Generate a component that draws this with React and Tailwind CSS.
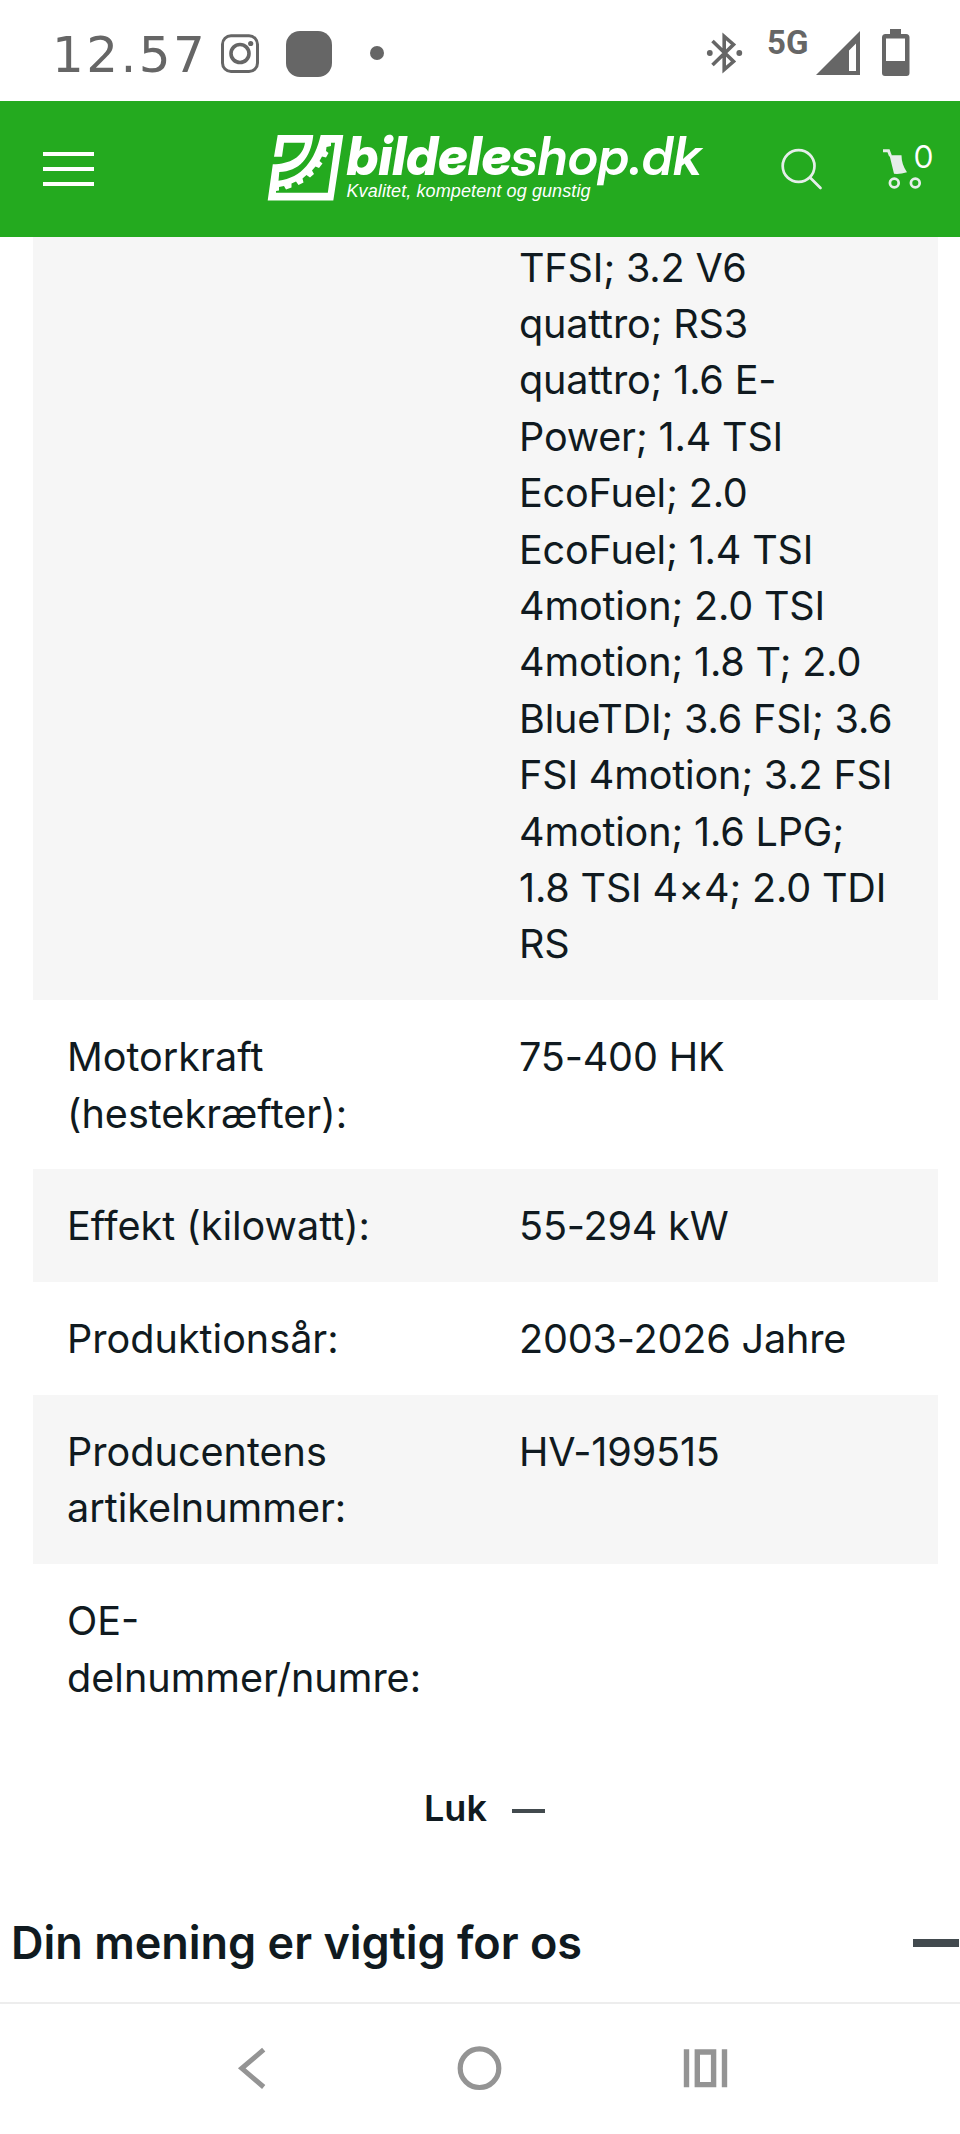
const rows = [
  { label: '', value: 'TFSI; 3.2 V6\nquattro; RS3\nquattro; 1.6 E-\nPower; 1.4 TSI\nEcoFuel; 2.0\nEcoFuel; 1.4 TSI\n4motion; 2.0 TSI\n4motion; 1.8 T; 2.0\nBlueTDI; 3.6 FSI; 3.6\nFSI 4motion; 3.2 FSI\n4motion; 1.6 LPG;\n1.8 TSI 4×4; 2.0 TDI\nRS', first: true },
  { label: 'Motorkraft\n(hestekræfter):', value: '75-400 HK' },
  { label: 'Effekt (kilowatt):', value: '55-294 kW' },
  { label: 'Produktionsår:', value: '2003-2026 Jahre' },
  { label: 'Producentens\nartikelnummer:', value: 'HV-199515' },
  { label: 'OE-\ndelnummer/numre:', value: '' },
];

function StatusBar() {
  return (
    <div className="flex h-[101px] shrink-0 items-start text-[#666666]">
      <div className="ml-[52px] mt-[25px] h-[60px] w-[168px] font-['DejaVu_Sans'] text-[50px] leading-[60px] tracking-[2.4px]">12.57</div>
      <svg className="mt-[34px] h-[39px] w-[39px]" viewBox="0 0 39 39" fill="none" stroke="currentColor" strokeWidth="3">
        <rect x="2.5" y="1.8" width="35" height="35.7" rx="8.5" />
        <circle cx="20" cy="19.5" r="9" strokeWidth="3.6" />
        <circle cx="30.7" cy="9.5" r="2.6" fill="currentColor" stroke="none" />
      </svg>
      <div className="ml-[27px] mt-[31px] h-[46px] w-[46px] rounded-[14px] bg-[#666666]" />
      <div className="ml-[38px] mt-[46px] h-[14px] w-[14px] rounded-full bg-[#666666]" />
      <svg className="ml-[321px] mt-[32px] h-[42px] w-[40px]" viewBox="0 0 40 42" fill="none" stroke="currentColor" strokeWidth="3.6">
        <path d="M7.500 9 L28.500 29.500 L19.200 37.5 V4.500 L28.500 12.500 L7.500 33" />
        <circle cx="4.800" cy="21" r="2.9" fill="currentColor" stroke="none" />
        <circle cx="34.300" cy="21" r="2.9" fill="currentColor" stroke="none" />
      </svg>
      <div className="ml-[22px] mt-[24px] w-[47px] font-[Roboto] text-[33px] font-bold leading-[38px]">5G</div>
      <svg className="ml-[2px] mt-[31px] h-[45px] w-[45px]" viewBox="0 0 45 45">
        <path fillRule="evenodd" fill="currentColor" d="M0 44 L44 0 V44 Z M33 19.500 V40 H40 V12.500 Z" />
      </svg>
      <svg className="ml-[20px] mt-[29px] h-[48px] w-[29px]" viewBox="0 0 29 48">
        <path fillRule="evenodd" fill="currentColor" d="M9 0 H20 V5 H25 Q28.500 5 28.500 8.500 V44 Q28.500 47 25.500 47 H4 Q1 47 1 44 V8.500 Q1 5 4.500 5 H9 Z M5 9.500 V32 H24 V9.500 Z" />
      </svg>
    </div>
  );
}

function Logo() {
  return (
    <svg className="ml-[166px] mt-[27px] h-[80px] w-[445px] shrink-0 overflow-visible" viewBox="260 128 445 80" fill="#ffffff">
      <path
        fillRule="evenodd"
        d="M277.700 135 H313.300 C311 158 299 171.500 279.300 172 L278.500 180.700 C302 178 315 160 320.700 135 H343.300 L333.300 200.500 H267.700 L272.800 164.300 C290 164 303 157 305 142.700 H284 L282 156.700 H274 Z M335 142.700 H331 V146 L326.500 147 L326 151 L328.500 153 L326 157.500 L322 156.500 L319.500 161 L322.500 163.500 L319 168 L315.500 166.500 L312 170.500 L314 174 L310 177.500 L306.500 175 L302.500 178.500 L303.500 182.500 L298.500 185 L296 181.500 L291.500 183.500 L291.500 187.500 L286 189.500 L284 186 L279 187 L279 190.500 L276 191 V192.700 H327.800 Z"
      />
      <text x="346.500" y="175" fontFamily="'Inter Display', Inter" fontWeight="800" fontStyle="italic" fontSize="54" textLength="165" lengthAdjust="spacingAndGlyphs">bildele</text>
      <text x="510.500" y="175" fontFamily="'Inter Display', Inter" fontWeight="600" fontStyle="italic" fontSize="53" textLength="191" lengthAdjust="spacingAndGlyphs">shop.dk</text>
      <text x="346.500" y="197" fontFamily="'Liberation Sans'" fontStyle="italic" fontSize="18" textLength="244">Kvalitet, kompetent og gunstig</text>
    </svg>
  );
}

function Header() {
  return (
    <header className="flex h-[136px] shrink-0 items-start bg-[#24aa1f] text-[#e5eeea]">
      <div className="ml-[43px] mt-[51px] flex w-[51px] flex-col gap-[11px]">
        <div className="h-[4px] bg-white" />
        <div className="h-[4px] bg-white" />
        <div className="h-[4px] bg-white" />
      </div>
      <Logo />
      <svg className="ml-[75px] mt-[46px] h-[44px] w-[44px]" viewBox="0 0 44 44" fill="none" stroke="currentColor" strokeWidth="2.700" strokeLinecap="round">
        <circle cx="18.600" cy="19" r="15.900" />
        <path d="M30 30.500 L40.500 41" />
      </svg>
      <svg className="ml-[58px] mt-[46px] h-[44px] w-[40px]" viewBox="0 0 40 44">
        <path d="M1 3.700 H6.500 L8.500 9" fill="none" stroke="currentColor" strokeWidth="3" />
        <path d="M7.500 8.200 H19.500 Q19.500 17.500 25 25.200 Q18 27.500 12 26.800 Z" fill="currentColor" />
        <circle cx="12.300" cy="36" r="4.400" fill="none" stroke="currentColor" strokeWidth="2.700" />
        <circle cx="33.300" cy="36" r="4.400" fill="none" stroke="currentColor" strokeWidth="2.700" />
      </svg>
      <div className="-ml-[8px] mt-[37px] w-[24px] font-['Inter_Display'] text-[31px] leading-[38px] text-white">0</div>
    </header>
  );
}

export default function App() {
  return (
    <div className="flex h-[2134px] w-[960px] flex-col overflow-hidden bg-white font-[Inter,sans-serif] text-[#101a20]">
      <StatusBar />
      <Header />
      <main className="ml-[33px] w-[905px] text-[39.6px] leading-[56.4px]">
        {rows.map((row, i) => (
          <div
            key={i}
            className={`grid grid-cols-2 whitespace-pre-line px-[34px] pb-[27.2px] ${row.first ? 'pt-[2.6px]' : 'pt-[29.2px]'} ${i % 2 === 0 ? 'bg-[#f6f6f6]' : 'bg-white'}`}
          >
            <div>{row.label}</div>
            <div className="-mr-[10px] pl-[33.5px] tracking-[-0.18px]">{row.value}</div>
          </div>
        ))}
      </main>
      <div className="mt-[45px] flex h-[60px] shrink-0 items-center pl-[424px] text-[36px] font-semibold">
        <span className="w-[88px]">Luk</span>
        <span className="mt-[5px] h-[4px] w-[33px] bg-[#424a4e]" />
      </div>
      <div className="mt-[75px] flex h-[60px] shrink-0 items-center justify-between pl-[11px] pr-px">
        <h2 className="text-[45px] font-semibold leading-[60px]">Din mening er vigtig for os</h2>
        <span className="h-[8px] w-[46px] bg-[#424a4e]" />
      </div>
      <nav className="mt-auto flex h-[132px] shrink-0 items-start border-t-2 border-[#ededed] text-[#949494]">
        <svg className="ml-[236px] mt-[42px] h-[44px] w-[32px]" viewBox="0 0 32 44" fill="none" stroke="currentColor" strokeWidth="5">
          <path d="M27.700 3.700 L5.800 22.300 L27.700 41" />
        </svg>
        <svg className="ml-[189px] mt-[42px] h-[46px] w-[46px]" viewBox="0 0 46 46" fill="none" stroke="currentColor" strokeWidth="5.200">
          <circle cx="22.500" cy="22.200" r="19.300" />
        </svg>
        <svg className="ml-[180px] mt-[45px] h-[40px] w-[46px]" viewBox="0 0 46 40" fill="none" stroke="currentColor" strokeWidth="5.400">
          <path d="M3.500 0.300 V38.300 M41.500 0.300 V38.300 M14.300 3 H30.600 V35.600 H14.300 Z" />
        </svg>
      </nav>
    </div>
  );
}
